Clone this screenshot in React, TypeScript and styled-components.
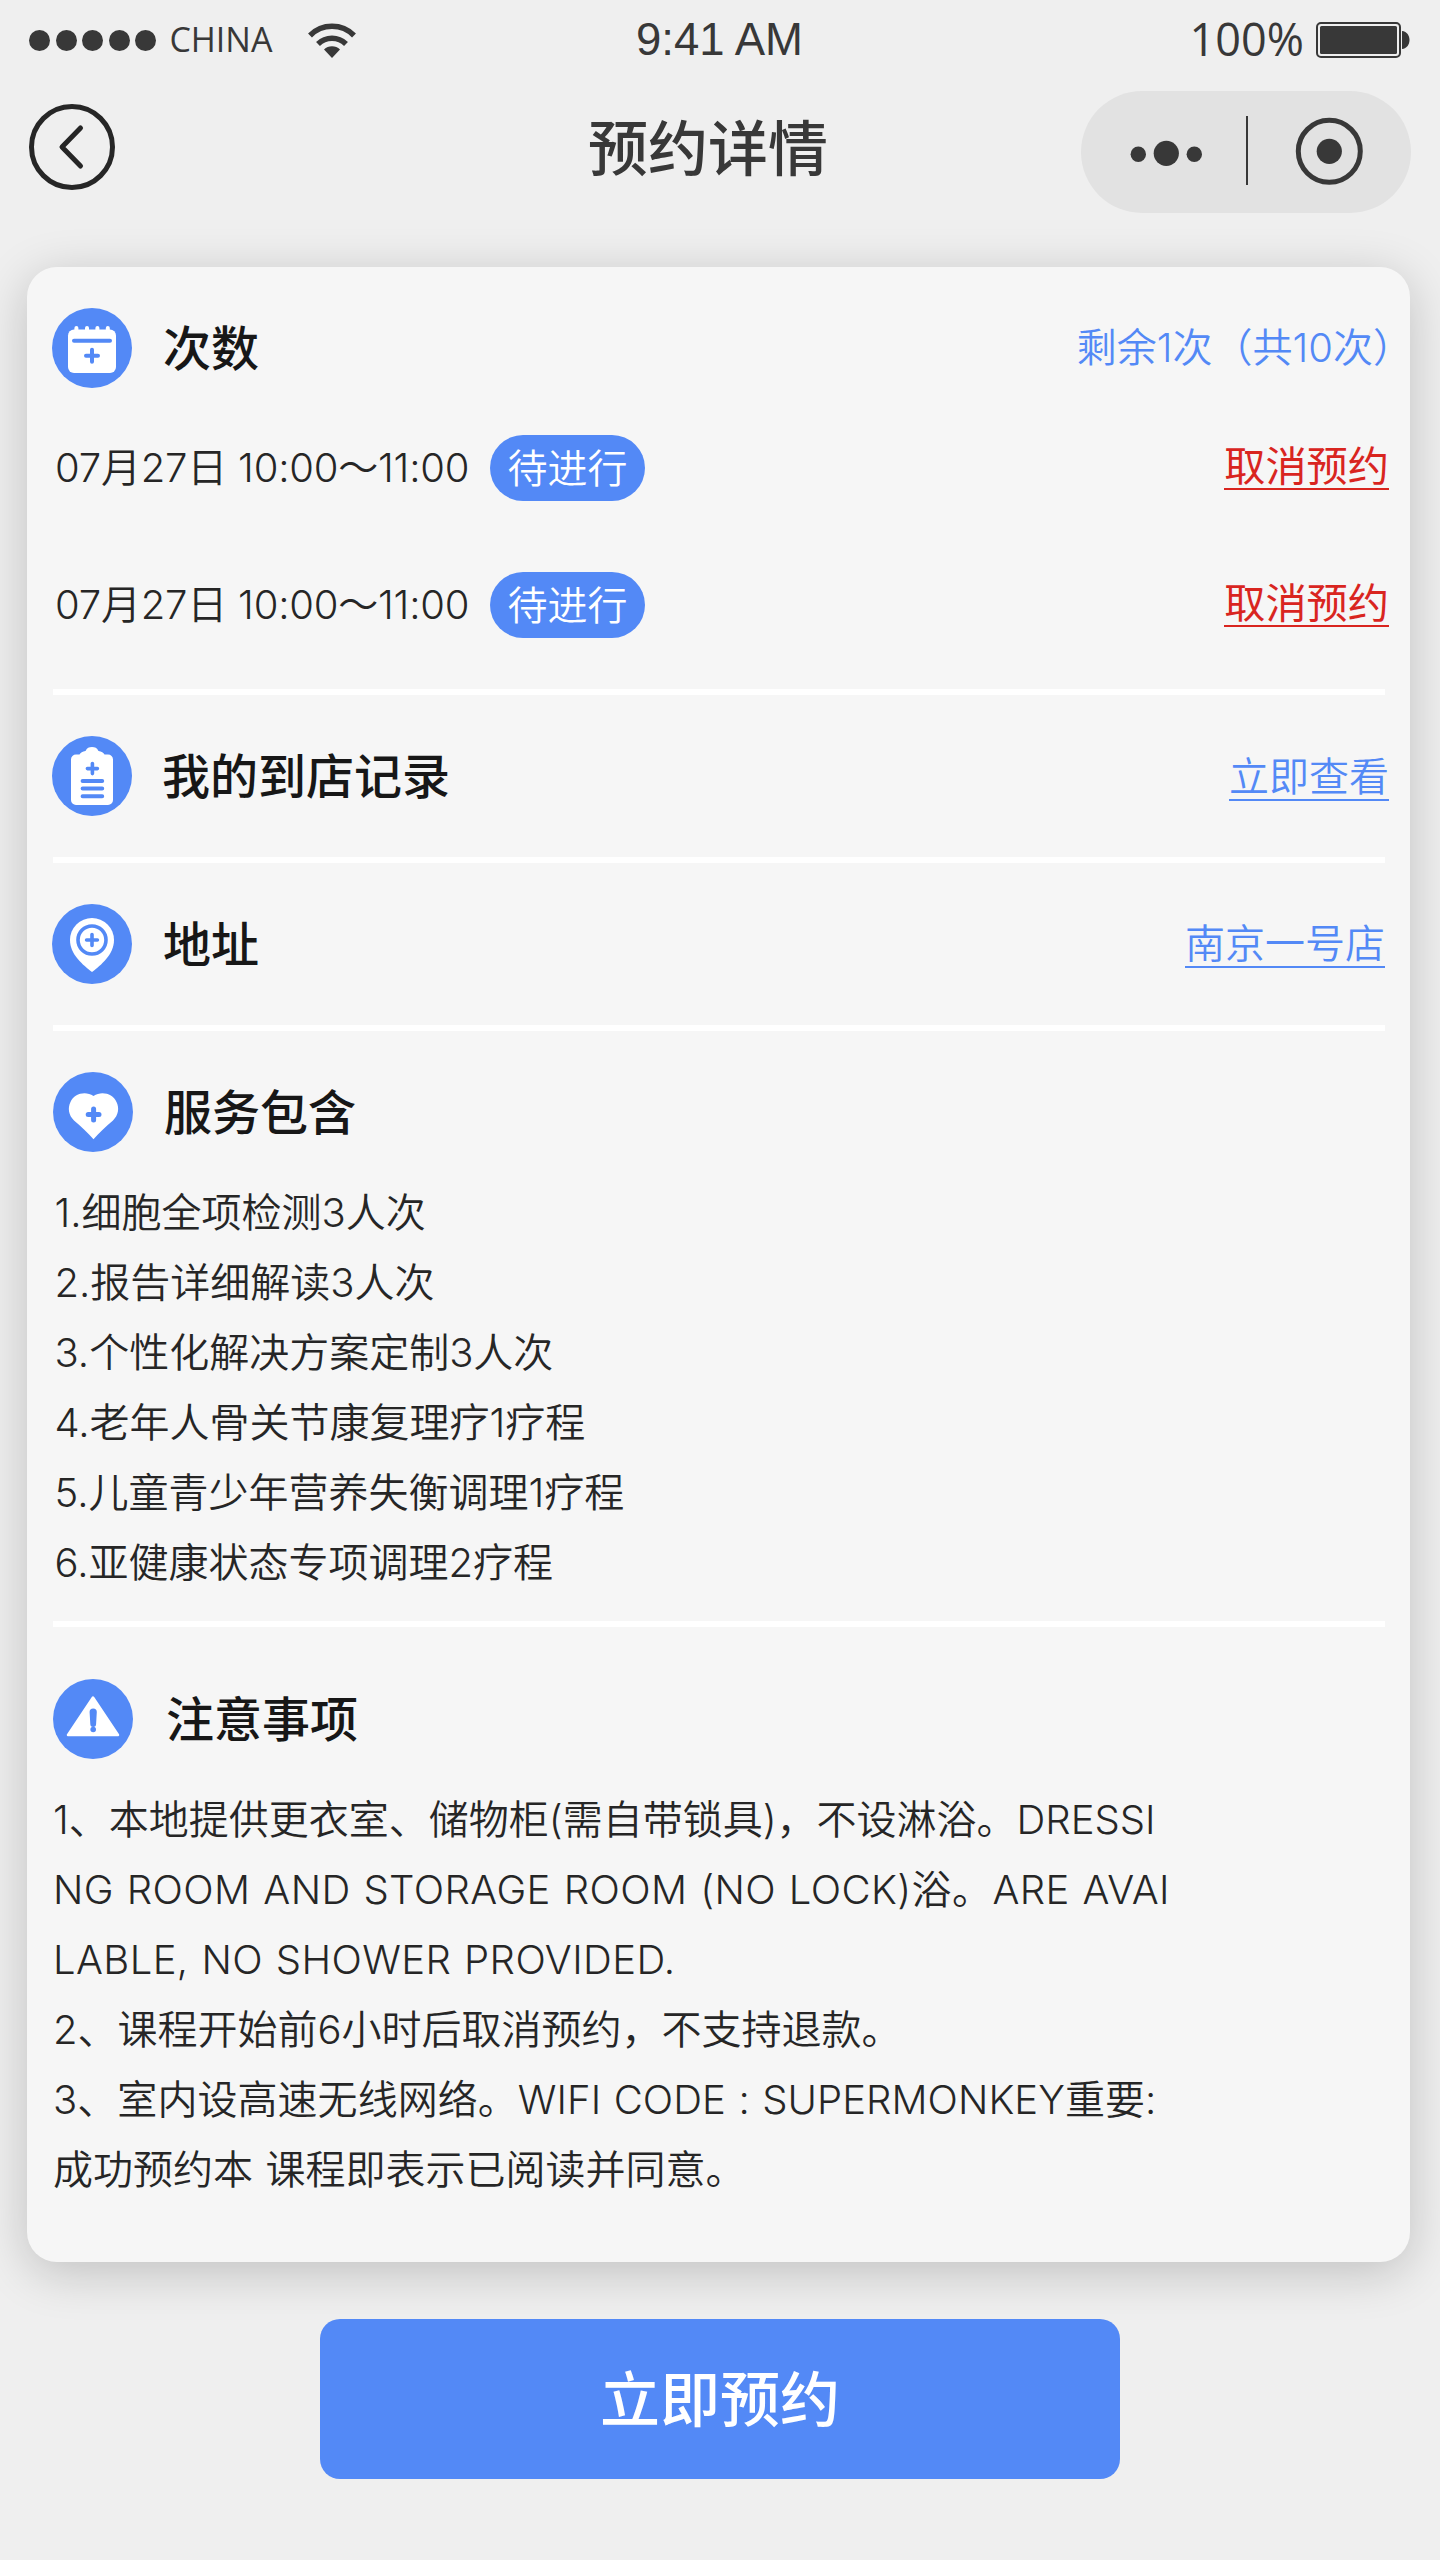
import React from "react";
import styled, { createGlobalStyle } from "styled-components";

const GlobalStyle = createGlobalStyle`
  * { box-sizing: border-box; }
  body { margin: 0; background: #efefef; }
`;

const BLUE = "#5389f6";
const CJK = `"Noto Sans CJK SC", sans-serif`;
const HEADING = `Inter, ${CJK}`;
const BODY = `Inter, "Noto Sans CJK SC DemiLight", ${CJK}`;

const Page = styled.main`
  width: 1440px;
  height: 2560px;
  overflow: hidden;
  background: #efefef;
  color: #262626;
  font-family: ${BODY};
  font-weight: 350;
  display: flex;
  flex-direction: column;
`;

const StatusBar = styled.header`
  height: 80px;
  padding: 0 30px 0 29px;
  display: grid;
  grid-template-columns: 1fr auto 1fr;
  align-items: center;
  color: #383838;
  font-family: "Open Sans", sans-serif;
  font-weight: 400;
`;
const Carrier = styled.div`
  display: flex;
  align-items: center;
`;
const Signal = styled.div`
  display: flex;
  gap: 5.6px;
  margin-right: 13px;
`;
const SignalDot = styled.i`
  width: 21px;
  height: 21px;
  border-radius: 50%;
  background: #383838;
`;
const CarrierName = styled.span`
  padding-bottom: 1px;
  font-size: 34px;
  line-height: 79px;
  margin-right: 36px;
`;
const Clock = styled.time`
  font-family: "Liberation Sans", sans-serif;
  font-size: 45.5px;
  line-height: 80px;
`;
const Power = styled.div`
  display: flex;
  align-items: center;
  justify-content: flex-end;
  gap: 12px;
  font-size: 45px;
  line-height: 80px;
`;
const Percent = styled.span`
  padding-bottom: 2px;
  line-height: 78px;
`;

const NavBar = styled.nav`
  height: 187px;
  padding: 11px 29px 0;
  display: grid;
  grid-template-columns: 1fr auto 1fr;
  align-items: start;
`;
const BackButton = styled.button`
  width: 86px;
  height: 86px;
  margin-top: 13px;
  padding: 0;
  border: 0;
  background: none;
`;
const PageTitle = styled.h1`
  margin: 15px 0 0;
  padding-right: 24px;
  font-family: ${HEADING};
  font-size: 60px;
  line-height: 86px;
  font-weight: 500;
  color: #383838;
`;
const Capsule = styled.div`
  width: 330px;
  height: 122px;
  border-radius: 61px;
  background: #e2e2e2;
  justify-self: end;
`;

const Card = styled.section`
  width: 1383px;
  height: 1995px;
  margin-left: 27px;
  padding: 0 25px 0 26px;
  border-radius: 30px;
  background: #f6f6f6;
  box-shadow: 0 10px 50px rgba(0, 0, 0, 0.2);
  display: flex;
  flex-direction: column;
  flex-shrink: 0;
`;
const Divider = styled.hr`
  width: 1332px;
  height: 6px;
  margin: 0;
  border: 0;
  background: #fff;
  flex-shrink: 0;
`;
const Section = styled.section<{ $height: number; $top: number }>`
  height: ${(p) => p.$height}px;
  padding-top: ${(p) => p.$top}px;
  flex-shrink: 0;
`;
const SectionHead = styled.div<{ $inset?: number; $bleed?: number }>`
  height: 80px;
  margin-right: ${(p) => -(p.$bleed ?? 0)}px;
  margin-left: ${(p) => p.$inset ?? -1}px;
  display: flex;
  align-items: center;
`;
const SectionTitle = styled.h2<{ $gap?: number }>`
  margin: 0 auto 0 ${(p) => p.$gap ?? 31}px;
  padding-top: 2px;
  font-family: ${HEADING};
  font-size: 48px;
  line-height: 78px;
  font-weight: 500;
  color: #171717;
`;
const Remaining = styled.span`
  font-size: 40px;
  line-height: 80px;
  color: ${BLUE};
  white-space: nowrap;
`;
const TextLink = styled.a<{ $danger?: boolean; $drop?: number }>`
  display: block;
  height: ${(p) => (p.$danger ? 44 : 47)}px;
  margin-top: ${(p) => p.$drop ?? 0}px;
  font-family: ${(p) => (p.$danger ? HEADING : BODY)};
  font-size: ${(p) => (p.$danger ? 41.2 : 40)}px;
  font-weight: ${(p) => (p.$danger ? 400 : 350)};
  line-height: ${(p) => (p.$danger ? 41 : 46)}px;
  color: ${(p) => (p.$danger ? "#d9251f" : BLUE)};
  border-bottom: 2px solid currentColor;
`;
const Booking = styled.div`
  height: 66px;
  margin: 0 -4px 71px 2px;
  display: flex;
  align-items: center;
`;
const Bookings = styled.div`
  padding-top: 47px;
`;
const Slot = styled.span`
  width: 435px;
  font-size: 40px;
  line-height: 66px;
  letter-spacing: -0.2px;
  white-space: nowrap;
`;
const Tag = styled.span`
  width: 155px;
  height: 66px;
  border-radius: 33px;
  margin-right: auto;
  background: ${BLUE};
  color: #fff;
  font-size: 40px;
  line-height: 68px;
  text-align: center;
`;
const Lines = styled.ul<{ $top: number; $inset: number }>`
  margin: 0;
  padding: ${(p) => p.$top}px 0 0 ${(p) => p.$inset}px;
  list-style: none;
`;
const Line = styled.li<{ $track?: number }>`
  font-size: 40px;
  line-height: 70px;
  letter-spacing: ${(p) => p.$track ?? 0}px;
  word-spacing: 1.2px;
  white-space: pre;
`;
const BookButton = styled.button`
  width: 800px;
  height: 160px;
  margin: 57px 0 0 320px;
  padding: 0 0 8px;
  border: 0;
  border-radius: 20px;
  background: ${BLUE};
  color: #fff;
  font-family: ${CJK};
  font-size: 60px;
  font-weight: 500;
  flex-shrink: 0;
`;

const Icon = styled.svg`
  width: 80px;
  height: 80px;
  flex-shrink: 0;
`;

const Plus = ({ x, y, r, w }: { x: number; y: number; r: number; w: number }) => (
  <path d={`M${x - r} ${y}h${2 * r}M${x} ${y - r}v${2 * r}`} stroke={BLUE} strokeWidth={w} strokeLinecap="round" />
);

const CalendarIcon = () => (
  <Icon viewBox="0 0 80 80" fill="none">
    <circle cx="40" cy="40" r="40" fill={BLUE} />
    <rect x="16" y="21.5" width="48" height="43.5" rx="6" fill="#fff" />
    <path d="M24.4 20v5M35 20v5M45.4 20v5M55.8 20v5" stroke="#fff" strokeWidth="4" strokeLinecap="round" />
    <path d="M22 32.7h36" stroke={BLUE} strokeWidth="4" strokeLinecap="round" />
    <Plus x={40} y={47.7} r={6} w={4} />
  </Icon>
);
const ClipboardIcon = () => (
  <Icon viewBox="0 0 80 80" fill="none">
    <circle cx="40" cy="40" r="40" fill={BLUE} />
    <path d="M24 18.5h3.5c1-2 3-3.2 6-3.6C35 12 37 11 40 11s5 1 6.5 3.9c3 .4 5 1.6 6 3.6H56a5 5 0 0 1 5 5V64a5 5 0 0 1-5 5H24a5 5 0 0 1-5-5V23.5a5 5 0 0 1 5-5z" fill="#fff" />
    <Plus x={40.4} y={32.6} r={5} w={3.6} />
    <path d="M30.6 45h19.6M30.6 52.6h19.6M30.6 60.3h19.6" stroke={BLUE} strokeWidth="4" strokeLinecap="round" />
  </Icon>
);
const PinIcon = () => (
  <Icon viewBox="0 0 80 80" fill="none">
    <circle cx="40" cy="40" r="40" fill={BLUE} />
    <path d="M40 68C31 61 18 50.5 18 36a22 22 0 0 1 44 0C62 50.5 49 61 40 68z" fill="#fff" />
    <circle cx="40" cy="36" r="14" stroke={BLUE} strokeWidth="3.6" />
    <Plus x={40} y={36} r={5.4} w={3.6} />
  </Icon>
);
const HeartIcon = () => (
  <Icon viewBox="0 0 80 80" fill="none">
    <circle cx="40" cy="40" r="40" fill={BLUE} />
    <path d="M40.5 67.3C35 61 28 54.5 21 48.5C15.5 43 14.5 36 17.5 30C21 22 32 18.5 40.5 24C49 18.5 60 22 63.5 30C66.5 36 65.5 43 60 48.5C53 54.5 46 61 40.5 67.3z" fill="#fff" />
    <Plus x={40.6} y={42.5} r={5.4} w={5} />
  </Icon>
);
const WarningIcon = () => (
  <Icon viewBox="0 0 80 80" fill="none">
    <circle cx="40" cy="40" r="40" fill={BLUE} />
    <path d="M40 18.5L65 56H15z" fill="#fff" stroke="#fff" strokeWidth="2.5" strokeLinejoin="round" />
    <path d="M36.6 33a3.6 3.6 0 0 1 7.2 0l-.7 12a2.9 2.9 0 0 1-5.8 0z" fill={BLUE} />
    <circle cx="40.2" cy="50.5" r="2.8" fill={BLUE} />
  </Icon>
);

const services = [
  "1.细胞全项检测3人次",
  "2.报告详细解读3人次",
  "3.个性化解决方案定制3人次",
  "4.老年人骨关节康复理疗1疗程",
  "5.儿童青少年营养失衡调理1疗程",
  "6.亚健康状态专项调理2疗程",
];

const notes = [
  { text: "1、本地提供更衣室、储物柜(需自带锁具)，不设淋浴。DRESSI" },
  { text: "NG ROOM AND STORAGE ROOM (NO LOCK)浴。ARE AVAI", track: 0.4 },
  { text: "LABLE, NO SHOWER PROVIDED.", track: 0.4 },
  { text: "2、课程开始前6小时后取消预约，不支持退款。" },
  { text: "3、室内设高速无线网络。WIFI CODE : SUPERMONKEY重要:", track: 0.05 },
  { text: "成功预约本 课程即表示已阅读并同意。" },
];

export default function App() {
  return (
    <Page>
      <GlobalStyle />
      <StatusBar>
        <Carrier>
          <Signal>
            {[0, 1, 2, 3, 4].map((n) => (
              <SignalDot key={n} />
            ))}
          </Signal>
          <CarrierName>CHINA</CarrierName>
          <svg width="48" height="35" viewBox="0 0 48 35" fill="none">
            <path d="M2 12.5a31 31 0 0 1 44 0M10 21a20 20 0 0 1 28 0" stroke="#383838" strokeWidth="5.5" />
            <path d="M24 35l-8-8.5a11.5 11.5 0 0 1 16 0z" fill="#383838" />
          </svg>
        </Carrier>
        <Clock>9:41 AM</Clock>
        <Power>
          <Percent>100%</Percent>
          <svg width="94" height="36" viewBox="0 0 94 36" fill="none">
            <rect x="1" y="1" width="83" height="34" rx="4" stroke="#383838" strokeWidth="2" />
            <rect x="4" y="4" width="77" height="28" rx="1.5" fill="#383838" />
            <path d="M86 9c10 1 10 17 0 18z" fill="#383838" />
          </svg>
        </Power>
      </StatusBar>
      <NavBar>
        <BackButton aria-label="返回">
          <svg width="86" height="86" viewBox="0 0 86 86" fill="none" stroke="#262626" strokeWidth="5">
            <circle cx="43" cy="43" r="40.5" />
            <path d="M51.5 24L33 43l18.5 19" strokeLinecap="round" strokeLinejoin="round" />
          </svg>
        </BackButton>
        <PageTitle>预约详情</PageTitle>
        <Capsule>
          <svg width="330" height="122" viewBox="0 0 330 122" fill="#383838">
            <circle cx="57.3" cy="63.3" r="7.7" />
            <circle cx="85.3" cy="62.3" r="12.6" />
            <circle cx="113.3" cy="63.3" r="7.7" />
            <path d="M165 25h2v69h-2z" />
            <circle cx="248.3" cy="60.3" r="31" fill="none" stroke="#383838" strokeWidth="5" />
            <circle cx="248.3" cy="60.3" r="12.6" />
          </svg>
        </Capsule>
      </NavBar>
      <Card>
        <Section $height={422} $top={41}>
          <SectionHead $bleed={28}>
            <CalendarIcon />
            <SectionTitle>次数</SectionTitle>
            <Remaining>剩余1次（共10次）</Remaining>
          </SectionHead>
          <Bookings>
            {[0, 1].map((n) => (
              <Booking key={n}>
                <Slot>07月27日 10:00～11:00</Slot>
                <Tag>待进行</Tag>
                <TextLink $danger>取消预约</TextLink>
              </Booking>
            ))}
          </Bookings>
        </Section>
        <Divider />
        <Section $height={162} $top={41}>
          <SectionHead $bleed={4}>
            <ClipboardIcon />
            <SectionTitle $gap={30}>我的到店记录</SectionTitle>
            <TextLink $drop={3}>立即查看</TextLink>
          </SectionHead>
        </Section>
        <Divider />
        <Section $height={162} $top={41}>
          <SectionHead>
            <PinIcon />
            <SectionTitle>地址</SectionTitle>
            <TextLink>南京一号店</TextLink>
          </SectionHead>
        </Section>
        <Divider />
        <Section $height={590} $top={41}>
          <SectionHead $inset={0}>
            <HeartIcon />
            <SectionTitle>服务包含</SectionTitle>
          </SectionHead>
          <Lines $top={26} $inset={1.5}>
            {services.map((s) => (
              <Line key={s}>{s}</Line>
            ))}
          </Lines>
        </Section>
        <Divider />
        <Section $height={600} $top={52}>
          <SectionHead $inset={0}>
            <WarningIcon />
            <SectionTitle $gap={33}>注意事项</SectionTitle>
          </SectionHead>
          <Lines $top={26} $inset={0}>
            {notes.map((n) => (
              <Line key={n.text} $track={n.track}>
                {n.text}
              </Line>
            ))}
          </Lines>
        </Section>
      </Card>
      <BookButton>立即预约</BookButton>
    </Page>
  );
}
